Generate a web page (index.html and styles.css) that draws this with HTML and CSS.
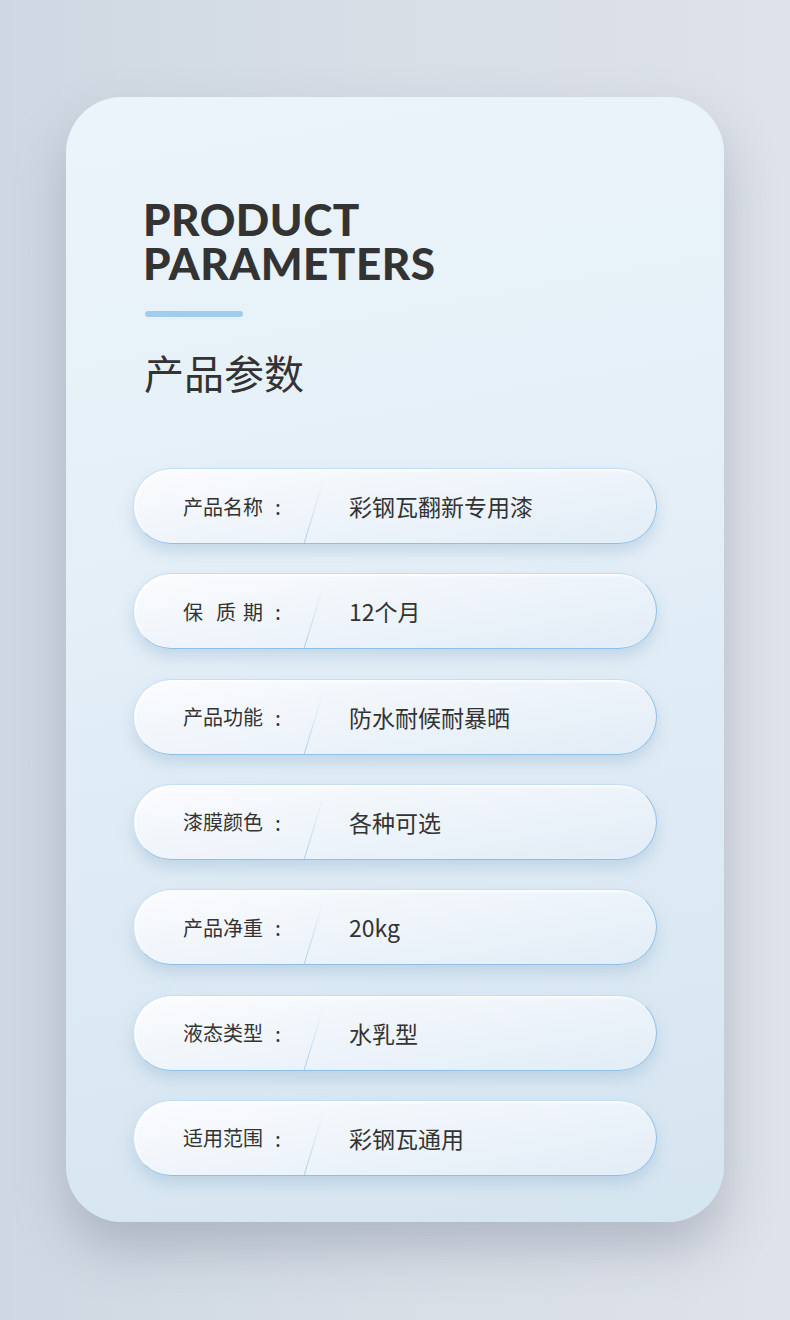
FILE: index.html
```html
<!DOCTYPE html>
<html lang="zh">
<head>
<meta charset="utf-8">
<link rel="stylesheet" href="styles.css">
</head>
<body>
<div class="page">
  <div class="card">
    <div class="head">
      <h1 class="en-title">PRODUCT<br>PARAMETERS</h1>
      <div class="bar"></div>
      <h2 class="cn-title">产品参数</h2>
    </div>
    <div class="rows">
      <div class="row"><span class="label">产品名称<span class="colon">:</span></span><span class="sep"></span><span class="value">彩钢瓦翻新专用漆</span></div>
      <div class="row"><span class="label">保<span class="gap"></span>质<span class="gap2"></span>期<span class="colon">:</span></span><span class="sep"></span><span class="value">12个月</span></div>
      <div class="row"><span class="label">产品功能<span class="colon">:</span></span><span class="sep"></span><span class="value">防水耐候耐暴晒</span></div>
      <div class="row"><span class="label">漆膜颜色<span class="colon">:</span></span><span class="sep"></span><span class="value">各种可选</span></div>
      <div class="row"><span class="label">产品净重<span class="colon">:</span></span><span class="sep"></span><span class="value">20kg</span></div>
      <div class="row"><span class="label">液态类型<span class="colon">:</span></span><span class="sep"></span><span class="value">水乳型</span></div>
      <div class="row"><span class="label">适用范围<span class="colon">:</span></span><span class="sep"></span><span class="value">彩钢瓦通用</span></div>
    </div>
  </div>
</div>
</body>
</html>
```
FILE: styles.css
```css
* { box-sizing: border-box; }
html, body { margin: 0; padding: 0; }
body {
  width: 790px;
  height: 1320px;
  overflow: hidden;
  background: linear-gradient(90deg, #cfd8e2 0%, #d7dee6 50%, #dee2ea 100%);
  font-family: "Noto Sans CJK SC", "Noto Sans", sans-serif;
  color: #333;
}
.page {
  padding: 97px 66px 0 66px;
}
.card {
  width: 658px;
  height: 1125px;
  border-radius: 56px;
  background: linear-gradient(170deg, #ebf4fa 0%, #e4eff7 40%, #d5e5f0 100%);
  box-shadow: 0 26px 50px rgba(110, 122, 140, 0.38);
  padding: 100px 0 0 0;
}
.head {
  padding-left: 77px;
}
.en-title {
  margin: 0;
  font-family: "Lato", "Inter", sans-serif;
  font-weight: 900;
  font-size: 44px;
  line-height: 44px;
  letter-spacing: 0.5px;
  color: #333;
}
.bar {
  margin: 26px 0 0 2px;
  width: 98px;
  height: 6px;
  border-radius: 3px;
  background: #a3cbeb;
}
.cn-title {
  margin: 27px 0 0 1px;
  font-weight: 400;
  font-size: 40px;
  line-height: 56px;
  color: #333;
}
.rows {
  margin: 68px 0 0 67px;
  width: 524px;
  display: flex;
  flex-direction: column;
  gap: 29.33px;
}
.row {
  position: relative;
  height: 76px;
  border-radius: 38px;
  display: flex;
  align-items: center;
  background: linear-gradient(170deg, #fbfcfe 0%, #eef4fa 50%, #e2edf7 100%);
  border: 1.5px solid #8ebfe9;
  border-top-color: #c4def4;
  border-left-color: #c8dff3;
  box-shadow: 0 8px 14px rgba(140, 175, 205, 0.35), inset 2px 2px 3px rgba(255,255,255,0.9);
  color: #333;
}
.label {
  width: 170px;
  padding-left: 49px;
  white-space: nowrap;
  font-size: 20px;
  display: flex;
  align-items: center;
}
.colon {
  margin-left: 12px;
  font-size: 21px;
}
.gap { display: inline-block; width: 13px; }
.gap2 { display: inline-block; width: 7px; }
.sep {
  position: absolute;
  left: 181px;
  top: 0;
  width: 1px;
  height: 74px;
  background: linear-gradient(180deg, rgba(255,255,255,0.9), #a9cdee);
  transform: skewX(-17deg);
}
.value {
  margin-left: 45px;
  font-size: 23px;
}
```
